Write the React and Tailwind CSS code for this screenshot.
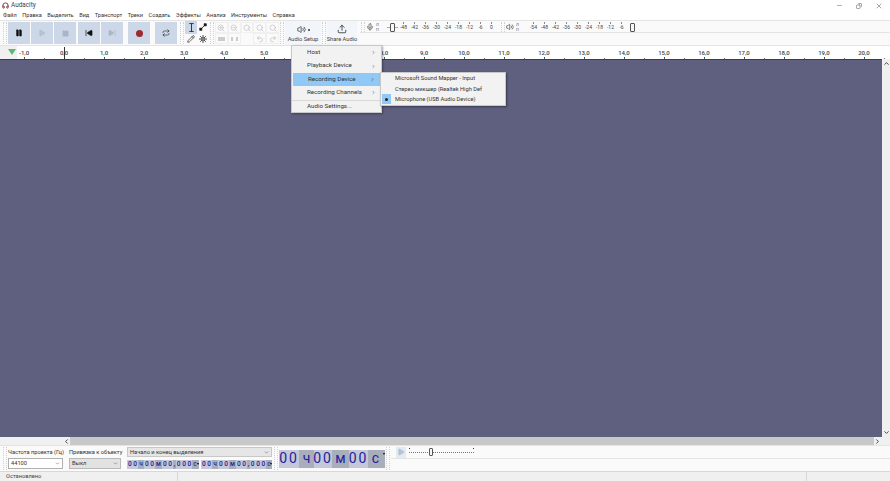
import { Pause, Play, Square, SkipBack, SkipForward, Repeat, Pencil, ZoomIn, ZoomOut, Undo2, Redo2, Mic, Volume2, Upload, Minus, X, Copy, ChevronRight, ChevronDown, ChevronLeft, ChevronUp, Headphones, Search } from 'lucide-react';

const menus = ['Файл', 'Правка', 'Выделить', 'Вид', 'Транспорт', 'Треки', 'Создать', 'Эффекты', 'Анализ', 'Инструменты', 'Справка'];
const rulerLabels = ['-1,0', '0,0', '1,0', '2,0', '3,0', '4,0', '5,0', '6,0', '7,0', '8,0', '9,0', '10,0', '11,0', '12,0', '13,0', '14,0', '15,0', '16,0', '17,0', '18,0', '19,0', '20,0'];

const Grip = () => <div className="w-[4px] self-stretch mx-[1px] my-[1px] border-x border-dotted border-[#d0d0d0]" />;

const TransportButton = ({ children, className = '' }) => (
  <div className={`w-[22px] h-[22px] bg-[#ccd8e8] flex items-center justify-center ${className}`}>{children}</div>
);

const Knob = () => <div className="relative w-[5px] h-[9px] mx-auto bg-[#f7f7f7] border border-[#555] rounded-[1px]" />;

const MeterCell = ({ label }) => (
  <div className="relative w-[11px] h-[12px] pt-[1px] flex items-center justify-center text-[5px] text-[#444]">
    <div className="absolute top-[1px] left-[5px] w-px h-[2px] bg-[#888]" />
    {label}
  </div>
);

const Meter = ({ icon, labels, knobFirst, className }) => (
  <div className="flex items-center w-[140px] h-[12px]">
    <Grip />
    <div className="w-[8px] flex justify-center">{icon}</div>
    <div className="flex flex-col w-[4px] ml-[2px] text-[4px] leading-[5px] text-[#555]">
      <span>Л</span>
      <span>П</span>
    </div>
    <div className={`flex items-center ${className}`}>
      {knobFirst && (
        <div className="relative w-[11px]">
          <div className="absolute left-0 right-0 top-1/2 border-t border-[#aaa]" />
          <Knob />
        </div>
      )}
      {labels.map((m) => <MeterCell key={m} label={m} />)}
      {!knobFirst && (
        <div className="w-[11px]"><Knob /></div>
      )}
    </div>
  </div>
);

const smallSegments = [
  { t: '0 0', w: 'w-[11px]' },
  { t: 'ч', w: 'w-[6px]', unit: true },
  { t: '0 0', w: 'w-[11px]' },
  { t: 'м', w: 'w-[7px]', unit: true },
  { t: '0 0', w: 'w-[11px]' },
  { t: ',', w: 'w-[3px]', unit: true },
  { t: '0 0 0', w: 'w-[16px]' },
  { t: 'с', w: 'w-[6px]', unit: true },
];

const bigSegments = [
  { t: '00', w: 'w-[20px] tracking-[2px]' },
  { t: 'ч', w: 'w-[15px]', unit: true },
  { t: '00', w: 'w-[18px] tracking-[2px]' },
  { t: 'м', w: 'w-[17px]', unit: true },
  { t: '00', w: 'w-[19px] tracking-[2px]' },
  { t: 'с', w: 'w-[15px]', unit: true },
];

const Clock = ({ segments, className }) => (
  <div className={`flex items-stretch text-[#22229c] ${className}`}>
    {segments.map((s, i) => (
      <span key={i} className={`${s.w} flex items-center justify-center whitespace-pre ${s.unit ? 'bg-[#a9aebb]' : 'bg-[#c4c8d8]'}`}>{s.t}</span>
    ))}
    <span className="relative flex-1 bg-[#a9aebb]">
      <span className="absolute right-0 top-[3px] w-0 h-0 border-x-[1.5px] border-x-transparent border-t-[2px] border-t-black" />
    </span>
  </div>
);

const RecordingMenu = () => (
  <div className="absolute left-[291px] top-[45px] w-[91px] h-[68px] bg-[#f2f2f2] border border-[#c8c8c8] shadow-[1px_1px_2px_rgba(0,0,0,0.35)] text-[6.2px] text-[#333]">
    {['Host', 'Playback Device', 'Recording Device', 'Recording Channels'].map((item) => (
      <div key={item} className={`h-[13.4px] flex items-center justify-between pl-[15px] pr-[5px] ${item === 'Recording Device' ? 'bg-[#90c8f6] mx-[1px] pl-[14px]' : ''}`}>
        {item}
        <ChevronRight className="w-[5px] h-[5px]" strokeWidth={2} />
      </div>
    ))}
    <div className="border-t border-[#d8d8d8] h-[13px] flex items-center pl-[15px]">Audio Settings...</div>
  </div>
);

const DeviceMenu = () => (
  <div className="absolute left-[380px] top-[72px] w-[126px] h-[34px] bg-[#f2f2f2] border border-[#c8c8c8] shadow-[1px_1px_2px_rgba(0,0,0,0.4)] text-[5.7px] text-[#333]">
    <div className="h-[11px] flex items-center pl-[14px]">Microsoft Sound Mapper - Input</div>
    <div className="h-[10px] flex items-center pl-[14px]">Стерео микшер (Realtek High Def</div>
    <div className="h-[10px] flex items-center pl-[14px] relative">
      <div className="absolute left-[1px] top-0 w-[9px] h-[10px] bg-[#90c8f6] flex items-center justify-center">
        <div className="w-[3px] h-[3px] rounded-full bg-[#222]" />
      </div>
      Microphone (USB Audio Device)
    </div>
  </div>
);

const IBeamIcon = () => (
  <svg viewBox="0 0 8 10" className="w-[7px] h-[9px]" fill="none" stroke="#222" strokeWidth="1">
    <path d="M1.5 .5h5M4 .5v9M1.5 9.5h5" />
  </svg>
);

const EnvelopeIcon = () => (
  <svg viewBox="0 0 10 10" className="w-[8px] h-[8px]" fill="#111" stroke="#111" strokeWidth="1">
    <path d="M2 8L8 2" />
    <rect x="1" y="6.5" width="2.5" height="2.5" />
    <rect x="6.5" y="1" width="2.5" height="2.5" />
  </svg>
);

const MultiIcon = () => (
  <svg viewBox="0 0 10 10" className="w-[8px] h-[8px]" fill="none" stroke="#222" strokeWidth="1">
    <path d="M5 0v10M0 5h10M1.5 1.5l7 7M8.5 1.5l-7 7" />
    <circle cx="5" cy="5" r="1.5" fill="#fff" />
  </svg>
);

const ZoomCell = ({ children }) => (
  <div className="h-[11px] flex items-center justify-center border border-[#f0f0f0] text-[#bcbcbc]">{children}</div>
);

export default function App() {
  return (
    <div className="relative w-[890px] h-[481px] overflow-hidden flex flex-col bg-[#f0f0f0] font-['Roboto',sans-serif] text-[#333]">
      {/* title bar */}
      <div className="h-[11px] bg-white flex items-center pl-[2px] text-[6.4px]">
        <Headphones className="w-[7px] h-[7px] text-[#7a2030]" strokeWidth={3} />
        <span className="ml-[2px] text-[#444]">Audacity</span>
        <div className="ml-auto flex items-center gap-[13px] pr-[7px] text-[#777]">
          <Minus className="w-[7px] h-[7px]" />
          <Copy className="w-[6px] h-[6px] -scale-x-100" strokeWidth={2.5} />
          <X className="w-[8px] h-[8px]" />
        </div>
      </div>

      {/* menu */}
      <div className="h-[9px] bg-white flex items-center pl-[3px] gap-[5.5px] text-[5.6px] text-[#333] whitespace-nowrap">
        {menus.map((m) => <span key={m}>{m}</span>)}
      </div>

      {/* toolbars */}
      <div className="h-[26px] flex bg-[#fafafa] border-y border-[#e4e4e4]">
        <div className="flex items-center pl-[2px] w-[179px]">
          <Grip />
          <div className="flex gap-[1px]">
            <TransportButton><Pause className="w-[8px] h-[8px] text-[#111] fill-[#111]" /></TransportButton>
            <TransportButton><Play className="w-[8px] h-[8px] text-[#b4c2d4] fill-[#b4c2d4]" /></TransportButton>
            <TransportButton><Square className="w-[7px] h-[7px] text-[#a9b6c6] fill-[#a9b6c6]" /></TransportButton>
            <TransportButton className="ml-[1px]"><SkipBack className="w-[8px] h-[8px] text-[#111] fill-[#111]" /></TransportButton>
            <TransportButton><SkipForward className="w-[8px] h-[8px] text-[#a9b6c6] fill-[#a9b6c6]" /></TransportButton>
            <TransportButton className="ml-[4px]"><div className="w-[7px] h-[7px] rounded-full bg-[#9c2a2e]" /></TransportButton>
            <TransportButton className="ml-[4px]"><Repeat className="w-[8px] h-[8px] text-[#333]" /></TransportButton>
          </div>
        </div>
        <Grip />
        <div className="grid grid-cols-2 w-[24px] h-[24px] text-[#222]">
          <div className="bg-[#ccd8e8] flex items-center justify-center"><IBeamIcon /></div>
          <div className="flex items-center justify-center"><EnvelopeIcon /></div>
          <div className="flex items-center justify-center"><Pencil className="w-[8px] h-[8px]" /></div>
          <div className="flex items-center justify-center"><MultiIcon /></div>
        </div>
        <Grip />
        <div className="w-[64px] h-[24px] grid grid-cols-5 content-center">
          <ZoomCell><ZoomIn className="w-[8px] h-[8px]" /></ZoomCell>
          <ZoomCell><ZoomOut className="w-[8px] h-[8px]" /></ZoomCell>
          <ZoomCell><Search className="w-[8px] h-[8px]" /></ZoomCell>
          <ZoomCell><Search className="w-[8px] h-[8px]" /></ZoomCell>
          <ZoomCell><Search className="w-[8px] h-[8px]" /></ZoomCell>
          <ZoomCell><div className="w-[7px] h-[4px] bg-[#cccccc]" /></ZoomCell>
          <ZoomCell><div className="w-[7px] h-[4px] border-x-2 border-[#cccccc]" /></ZoomCell>
          <div />
          <ZoomCell><Undo2 className="w-[8px] h-[8px]" /></ZoomCell>
          <ZoomCell><Redo2 className="w-[8px] h-[8px]" /></ZoomCell>
        </div>
        <Grip />
        <div className="w-[36px] bg-[#f2f5fa] flex flex-col items-center pt-[3px] text-[5.7px] text-[#444]">
          <div className="h-[11px] flex items-center text-[#333]">
            <Volume2 className="w-[9px] h-[9px]" />
            <span className="ml-[2px] w-[2px] h-[2px] rounded-full bg-[#333]" />
          </div>
          <span className="whitespace-nowrap">Audio Setup</span>
        </div>
        <Grip />
        <div className="w-[30px] bg-[#f2f5fa] flex flex-col items-center pt-[3px] text-[5.7px] text-[#444]">
          <Upload className="w-[10px] h-[10px] text-[#333]" />
          <span className="mt-[1px] whitespace-nowrap">Share Audio</span>
        </div>
        <div className="flex-1 flex flex-col pl-[3px]">
          <div className="h-[12px] flex border-b border-[#e4e4e4]">
            <Meter
              knobFirst
              className="pl-[7px]"
              labels={['-48', '-42', '-36', '-30', '-24', '-18', '-12', '-6', '0']}
              icon={<Mic className="w-[8px] h-[8px] text-[#444]" />}
            />
            <Meter
              className="pl-[8px]"
              labels={['-54', '-48', '-42', '-36', '-30', '-24', '-18', '-12', '-6']}
              icon={<Volume2 className="w-[8px] h-[8px] text-[#444]" />}
            />
          </div>
        </div>
      </div>

      {/* ruler */}
      <div className="h-[13px] flex bg-[#f0f0f0]">
        <div className="w-[17px] flex justify-center items-start pt-[3px] pl-[7px] pr-[1px]">
          <div className="w-0 h-0 border-x-[4px] border-x-transparent border-t-[6px] border-t-[#5cba74]" />
        </div>
        <div className="relative flex-1 bg-white text-[6px] font-medium text-[#444]">
          {rulerLabels.map((l, i) => (
            <span key={l} className="absolute top-[2px] w-[20px] text-center" style={{ left: 37 + (i - 1) * 40 }}>{l}</span>
          ))}
          {rulerLabels.map((l, i) => (
            <div key={l} className="absolute bottom-0 w-px h-[2px] bg-[#555]" style={{ left: 47 + (i - 1) * 40 }} />
          ))}
          {rulerLabels.map((l, i) => (
            <div key={l} className="absolute bottom-0 w-px h-px bg-[#777]" style={{ left: 67 + (i - 1) * 40 }} />
          ))}
          <div className="absolute left-[47px] top-[1px] bottom-0 w-px bg-[#333]" />
        </div>
      </div>

      {/* canvas */}
      <div className="flex-1 flex min-h-0">
        <div className="flex-1 bg-[#5f6080] border-t border-[#3c3c50]" />
        <div className="w-[8px] bg-[#f0f0f0] flex flex-col items-center justify-between py-[1px]">
          <ChevronUp className="w-[7px] h-[7px] text-[#333]" strokeWidth={3} />
          <ChevronDown className="w-[7px] h-[7px] text-[#333]" strokeWidth={3} />
        </div>
      </div>
      <div className="h-[8px] flex items-center bg-[#f0f0f0]">
        <div className="w-[63px] h-full" />
        <ChevronLeft className="w-[7px] h-[7px] text-[#333]" strokeWidth={3} />
        <div className="flex-1 bg-[#c8c8c8] h-full" />
        <ChevronRight className="w-[7px] h-[7px] text-[#333]" strokeWidth={3} />
        <div className="w-[9px]" />
      </div>

      {/* bottom toolbars */}
      <div className="h-[26px] flex bg-[#fafafa] text-[5.7px] text-[#333] border-t border-[#e4e4e4]">
        <div className="w-[2px]" />
        <Grip />
        <div className="w-[61px] flex flex-col">
          <div className="h-[12px] flex items-center whitespace-nowrap">Частота проекта (Гц)</div>
          <div className="h-[11px] w-[55px] bg-white border border-[#b0b0b0] flex items-center justify-between px-[2px]">
            44100 <ChevronDown className="w-[5px] h-[5px]" />
          </div>
        </div>
        <div className="w-[58px] flex flex-col">
          <div className="h-[12px] flex items-center whitespace-nowrap">Привязка к объекту</div>
          <div className="h-[11px] w-[52px] bg-[#e2e2e2] border border-[#b8b8b8] flex items-center justify-between px-[2px]">
            Выкл <ChevronDown className="w-[5px] h-[5px]" />
          </div>
        </div>
        <div className="w-[146px] flex flex-col pt-[1px]">
          <div className="h-[10px] w-[145px] bg-[#e6e6e6] border border-[#c8c8c8] flex items-center justify-between px-[2px]">
            Начало и конец выделения <ChevronDown className="w-[5px] h-[5px]" />
          </div>
          <div className="flex gap-[2px] mt-[3px] text-[6.5px] font-medium">
            <Clock segments={smallSegments} className="w-[72px] h-[9px]" />
            <Clock segments={smallSegments} className="w-[71px] h-[9px]" />
          </div>
        </div>
        <Grip />
        <div className="w-[106px] flex items-center">
          <Clock segments={bigSegments} className="w-[106px] h-[18px] text-[14px]" />
        </div>
        <Grip />
        <div className="flex flex-col flex-1 pl-[5px]">
          <div className="h-[13px] flex items-center border-b border-[#e4e4e4] -ml-[5px] pl-[5px]">
            <div className="w-[10px] h-[11px] bg-[#e4eaf2] flex items-center justify-center">
              <Play className="w-[8px] h-[8px] text-[#b4c2d4] fill-[#b4c2d4]" />
            </div>
            <div className="relative w-[65px] h-[10px] ml-[3px] flex items-center">
              <div className="w-full border-t border-dotted border-[#777]" />
              <div className="absolute left-0 top-[1px] w-px h-px bg-[#333]" />
              <div className="absolute right-0 top-[1px] w-px h-px bg-[#333]" />
              <div className="absolute left-[20px] w-[4px] h-[8px] bg-[#f7f7f7] border border-[#555] rounded-[1px]" />
            </div>
          </div>
        </div>
      </div>

      {/* status */}
      <div className="h-[10px] flex text-[5.7px] text-[#444] border-t border-[#d8d8d8] bg-[#f0f0f0]">
        <div className="w-[178px] pl-[6px] flex items-center border-r border-[#d8d8d8]">Остановлено</div>
        <div className="w-[629px] border-r border-[#d8d8d8]" />
      </div>

      <RecordingMenu />
      <DeviceMenu />
    </div>
  );
}
